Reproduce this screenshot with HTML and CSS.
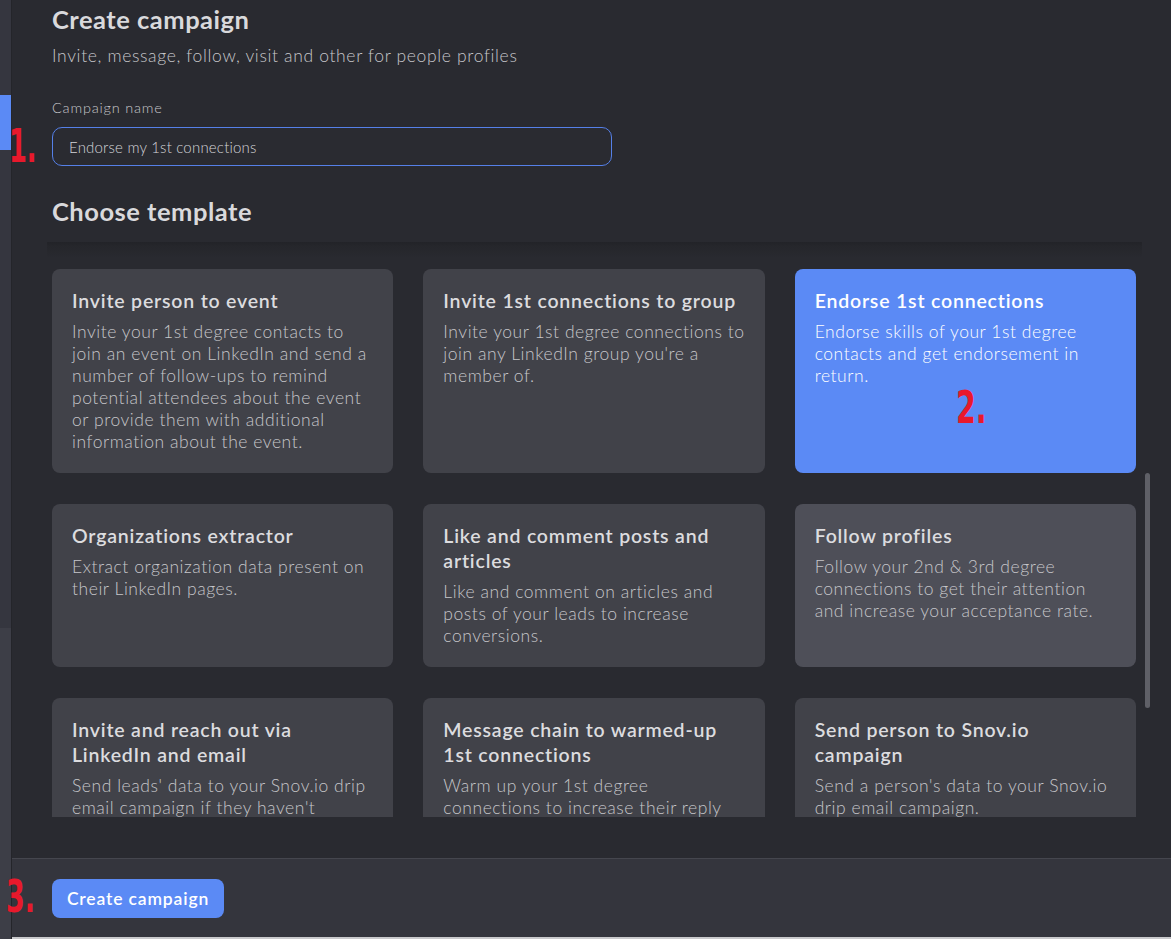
FILE: index.html
```html
<!DOCTYPE html>
<html lang="en">
<head>
<meta charset="utf-8">
<title>Create campaign</title>
<link rel="stylesheet" href="styles.css">
</head>
<body>
<div class="app">
  <aside class="sidebar">
    <div class="side-top">
      <div class="side-indicator"></div>
    </div>
    <div class="side-bottom"></div>
  </aside>
  <main class="main">
    <section class="content">
      <h1 class="page-title">Create campaign</h1>
      <p class="page-sub">Invite, message, follow, visit and other for people profiles</p>
      <label class="field-label" for="cname">Campaign name</label>
      <input class="field-input" id="cname" type="text" value="Endorse my 1st connections">
      <h2 class="section-title">Choose template</h2>
      <div class="scroll-area">
        <div class="grid">
          <div class="card">
            <div class="card-title">Invite person to event</div>
            <div class="card-desc">Invite your 1st degree contacts to join an event on LinkedIn and send a number of follow-ups to remind potential attendees about the event or provide them with additional information about the event.</div>
          </div>
          <div class="card">
            <div class="card-title">Invite 1st connections to group</div>
            <div class="card-desc">Invite your 1st degree connections to join any LinkedIn group you're a member of.</div>
          </div>
          <div class="card card-selected">
            <div class="card-title">Endorse 1st connections</div>
            <div class="card-desc">Endorse skills of your 1st degree contacts and get endorsement in return.</div>
          </div>
          <div class="card">
            <div class="card-title">Organizations extractor</div>
            <div class="card-desc">Extract organization data present on their LinkedIn pages.</div>
          </div>
          <div class="card">
            <div class="card-title">Like and comment posts and articles</div>
            <div class="card-desc">Like and comment on articles and posts of your leads to increase conversions.</div>
          </div>
          <div class="card card-hover">
            <div class="card-title">Follow profiles</div>
            <div class="card-desc">Follow your 2nd &amp; 3rd degree connections to get their attention and increase your acceptance rate.</div>
          </div>
          <div class="card">
            <div class="card-title">Invite and reach out via LinkedIn and email</div>
            <div class="card-desc">Send leads' data to your Snov.io drip email campaign if they haven't accepted your connection request.</div>
          </div>
          <div class="card">
            <div class="card-title">Message chain to warmed-up 1st connections</div>
            <div class="card-desc">Warm up your 1st degree connections to increase their reply rate.</div>
          </div>
          <div class="card">
            <div class="card-title">Send person to Snov.io campaign</div>
            <div class="card-desc">Send a person's data to your Snov.io drip email campaign.</div>
          </div>
        </div>
      </div>
    </section>
    <footer class="footer">
      <button class="btn-primary" type="button">Create campaign</button>
    </footer>
    <div class="bottom-strip"></div>
  </main>
  <div class="scroll-thumb"></div>
  <span class="mark mark-1">1.</span>
  <span class="mark mark-2">2.</span>
  <span class="mark mark-3">3.</span>
</div>
</body>
</html>
```

FILE: styles.css
```css
* { box-sizing: border-box; }
html, body {
  margin: 0;
  padding: 0;
  width: 1171px;
  height: 939px;
  overflow: hidden;
  background: #292a30;
  font-family: Lato, "Open Sans", sans-serif;
}
.app {
  position: relative;
  display: flex;
  width: 1171px;
  height: 939px;
}
.sidebar {
  width: 12px;
  flex: none;
  display: flex;
  flex-direction: column;
  border-right: 1px solid #24252a;
}
.side-top {
  height: 628px;
  background: #35363f;
  padding-top: 95px;
}
.side-indicator {
  height: 55px;
  background: #5b8af5;
}
.side-bottom {
  flex: 1;
  background: #3d3e47;
}
.main {
  flex: 1;
  display: flex;
  flex-direction: column;
  min-width: 0;
}
.content {
  padding: 4px 0 0 40px;
  height: 858px;
}
.page-title {
  margin: 0;
  font-size: 25.5px;
  line-height: 30px;
  font-weight: 700;
  letter-spacing: 0.5px;
  color: #d9d9dc;
}
.page-sub {
  margin: 10px 0 0;
  font-size: 17.5px;
  line-height: 24px;
  font-weight: 300;
  letter-spacing: 0.65px;
  color: #c6c6ca;
}
.field-label {
  display: block;
  margin-top: 31px;
  font-size: 14.5px;
  line-height: 18px;
  font-weight: 300;
  letter-spacing: 0.8px;
  color: #c6c6ca;
}
.field-input {
  display: block;
  margin-top: 10px;
  width: 560px;
  height: 39px;
  padding: 0 16px;
  background: #2a2b31;
  border: 1.5px solid #5580e8;
  border-radius: 10px;
  color: #d4d4d8;
  font-family: inherit;
  font-size: 15px;
  font-weight: 300;
  letter-spacing: 0.2px;
  outline: none;
}
.section-title {
  margin: 30px 0 0;
  font-size: 25.5px;
  line-height: 30px;
  font-weight: 700;
  letter-spacing: 0.5px;
  color: #d9d9dc;
}
.scroll-area {
  margin: 16px 0 0 -5px;
  width: 1095px;
  height: 575px;
  overflow: hidden;
  background: linear-gradient(#222328 0, #25262b 4px, #292a30 16px);
  padding: 27px 6px 0 5px;
}
.grid {
  display: grid;
  grid-template-columns: repeat(3, 1fr);
  column-gap: 30px;
  row-gap: 31px;
}
.card {
  background: #414249;
  border-radius: 8px;
  padding: 19px 20px 20px;
}
.card-hover { background: #4e4f58; }
.card-selected { background: #5b8af5; }
.card-title {
  font-size: 19.5px;
  line-height: 25px;
  font-weight: 600;
  letter-spacing: 0.8px;
  color: #dcdcdf;
}
.card-desc {
  margin-top: 8px;
  font-size: 17.5px;
  line-height: 22px;
  font-weight: 300;
  letter-spacing: 0.55px;
  color: #c6c6ca;
}
.card-selected .card-title,
.card-selected .card-desc { color: #ffffff; }
.footer {
  height: 79px;
  background: #34353d;
  border-top: 1px solid #45464e;
  padding: 20px 0 0 40px;
}
.btn-primary {
  width: 172px;
  height: 39px;
  border: none;
  border-radius: 8px;
  background: #5b8af5;
  color: #ffffff;
  font-family: inherit;
  font-size: 17.5px;
  font-weight: 600;
  letter-spacing: 0.85px;
  cursor: pointer;
}
.bottom-strip {
  height: 2px;
  background: #c9c9cc;
}
.scroll-thumb {
  position: absolute;
  left: 1145px;
  top: 473px;
  width: 5px;
  height: 235px;
  border-radius: 3px;
  background: #5f6067;
}
.mark {
  position: absolute;
  color: #e8192c;
  font-family: "DejaVu Sans Condensed", "DejaVu Sans", sans-serif;
  font-weight: 700;
  font-size: 46px;
  line-height: 1;
  transform: scaleX(0.62);
  transform-origin: left top;
}
.mark-1 { left: 9px; top: 123px; }
.mark-2 { left: 956px; top: 386px; font-size: 44px; transform: scaleX(0.72); }
.mark-3 { left: 6px; top: 875px; font-size: 44px; transform: scaleX(0.68); }
```
